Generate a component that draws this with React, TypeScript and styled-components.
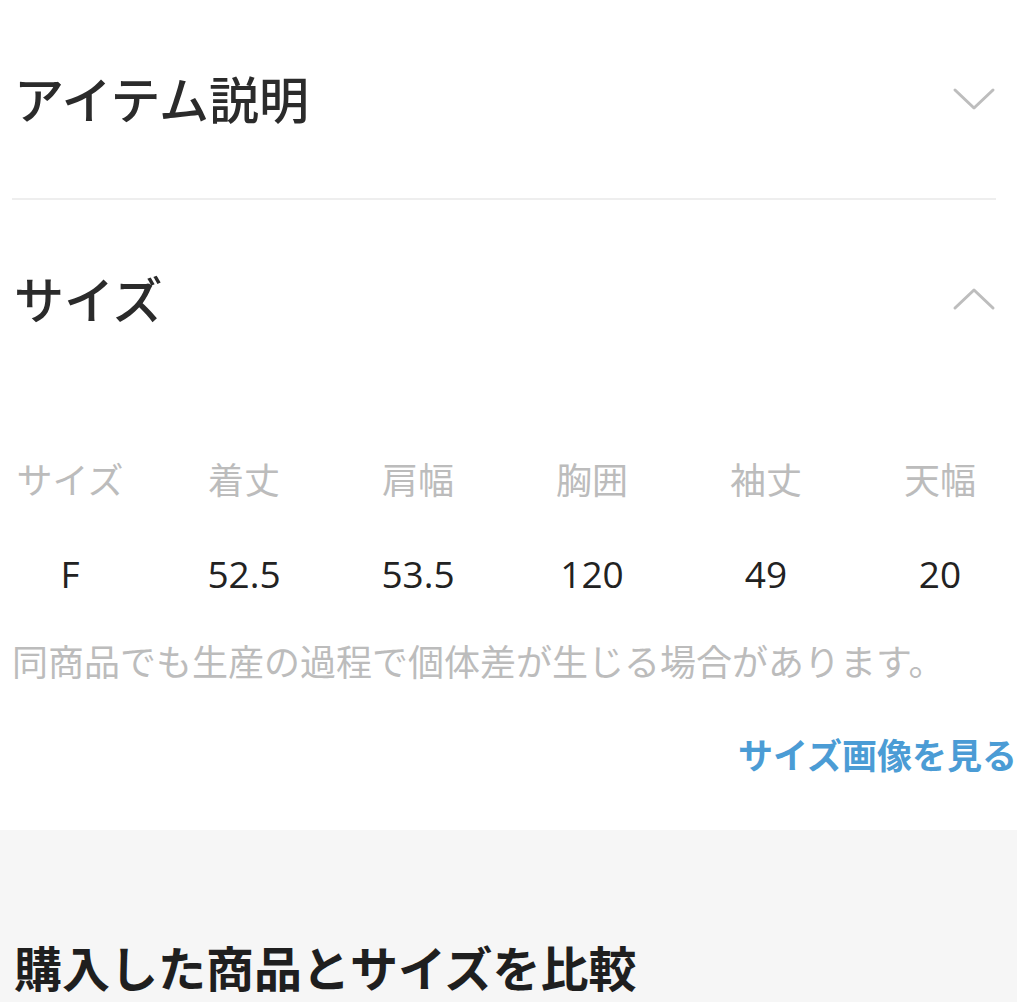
import styled, { createGlobalStyle } from "styled-components";

const GlobalStyle = createGlobalStyle`
    html, body {
        margin: 0;
        padding: 0;
        background: #ffffff;
        overflow-x: hidden;
    }
    body {
        font-family: "Open Sans", "Noto Sans CJK JP", sans-serif;
        color: #2b2b2b;
    }
`;

const Page = styled.div`
    width: 1017px;
`;

const Content = styled.div`
    padding-left: 12px;
`;

const AccordionHeader = styled.div`
    height: 198px;
    display: flex;
    align-items: center;
    justify-content: space-between;
    padding-right: 21px;
`;

const SectionTitle = styled.h2`
    margin: 0 0 4px;
    font-family: "Noto Sans CJK JP", sans-serif;
    font-size: 50px;
    font-weight: 500;
    color: #2b2b2b;
    padding-left: 2px;
`;

const Divider = styled.hr`
    margin: 0 21px 0 0;
    border: none;
    height: 2px;
    background: #eeeeee;
`;

const Chevron = styled.svg<{ $open?: boolean }>`
    width: 44px;
    height: 24px;
    transform: ${(p) => (p.$open ? "rotate(180deg)" : "none")};
`;

const SizeTable = styled.div`
    display: grid;
    grid-template-columns: repeat(6, 174px);
    margin-left: -29px;
    margin-top: 40px;
`;

const HeadCell = styled.div`
    height: 80px;
    line-height: 80px;
    text-align: center;
    font-family: "Noto Sans CJK JP", sans-serif;
    font-size: 36px;
    color: #bcbcbc;
`;

const ValueCell = styled.div`
    height: 76px;
    line-height: 76px;
    margin-top: 18px;
    text-align: center;
    font-size: 37px;
    color: #222222;
`;

const Note = styled.p`
    margin: 22px 0 0;
    height: 52px;
    line-height: 52px;
    font-family: "Noto Sans CJK JP", sans-serif;
    font-size: 36px;
    color: #bcbcbc;
    white-space: nowrap;
`;

const LinkRow = styled.div`
    display: flex;
    justify-content: flex-end;
    margin-top: 42px;
    padding-bottom: 50px;
`;

const SizeLink = styled.a`
    height: 52px;
    line-height: 52px;
    font-family: "Noto Sans CJK JP", sans-serif;
    font-size: 35px;
    font-weight: 700;
    color: #4b9cd5;
    text-decoration: none;
    white-space: nowrap;
`;

const CompareSection = styled.section`
    background: #f6f6f6;
    box-sizing: border-box;
    height: 172px;
    padding: 104px 0 0 12px;
`;

const CompareTitle = styled.h2`
    margin: 0;
    height: 64px;
    line-height: 64px;
    font-family: "Noto Sans CJK JP", sans-serif;
    font-size: 48px;
    font-weight: 700;
    color: #1f1f1f;
    padding-left: 2px;
    white-space: nowrap;
`;

const ChevronIcon = ({ open }: { open?: boolean }) => (
    <Chevron $open={open} viewBox="0 0 44 24">
        <polyline
            points="3,3 22,21 41,3"
            fill="none"
            stroke="#bdbdbd"
            strokeWidth="3"
            strokeLinecap="round"
            strokeLinejoin="round"
        />
    </Chevron>
);

const heads = ["サイズ", "着丈", "肩幅", "胸囲", "袖丈", "天幅"];
const values = ["F", "52.5", "53.5", "120", "49", "20"];

const App = () => {
    return (
        <Page>
            <GlobalStyle />
            <Content>
                <AccordionHeader>
                    <SectionTitle>アイテム説明</SectionTitle>
                    <ChevronIcon />
                </AccordionHeader>
                <Divider />
                <AccordionHeader>
                    <SectionTitle>サイズ</SectionTitle>
                    <ChevronIcon open />
                </AccordionHeader>

                <SizeTable>
                    {heads.map((h) => (
                        <HeadCell key={h}>{h}</HeadCell>
                    ))}
                    {values.map((v, i) => (
                        <ValueCell key={i}>{v}</ValueCell>
                    ))}
                </SizeTable>

                <Note>同商品でも生産の過程で個体差が生じる場合があります。</Note>

                <LinkRow>
                    <SizeLink href="#">サイズ画像を見る</SizeLink>
                </LinkRow>
            </Content>

            <CompareSection>
                <CompareTitle>購入した商品とサイズを比較</CompareTitle>
            </CompareSection>
        </Page>
    );
};

export default App;
